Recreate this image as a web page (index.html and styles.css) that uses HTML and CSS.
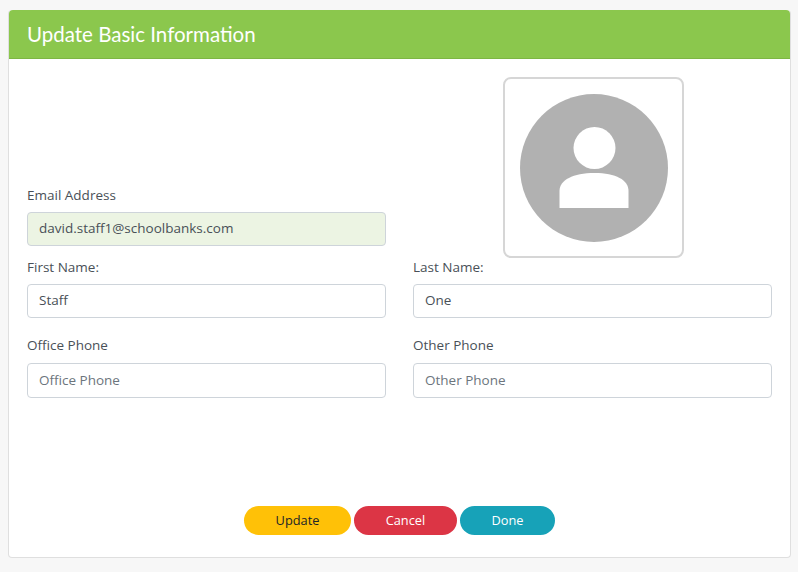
FILE: index.html
```html
<!DOCTYPE html>
<html lang="en">
<head>
<meta charset="utf-8">
<title>Update Basic Information</title>
<link rel="stylesheet" href="styles.css">
</head>
<body>
<main class="card">
  <header class="card-header"><h1>Update Basic Information</h1></header>
  <form class="card-body">
    <div class="top-row">
      <div class="field email-field">
        <label for="email">Email Address</label>
        <input id="email" class="filled" type="text" value="david.staff1@schoolbanks.com">
      </div>
      <div class="avatar-col">
        <div class="avatar">
          <svg viewBox="0 0 148 148" width="148" height="148" aria-hidden="true">
            <circle cx="74" cy="74" r="74" fill="#b1b1b1"/>
            <circle cx="74.500" cy="54" r="21" fill="#fff"/>
            <path d="M39.500 114V97C39.500 86 53 79 74.500 79S108.500 86 108.500 97V114Z" fill="#fff"/>
          </svg>
        </div>
      </div>
    </div>
    <div class="row name-row">
      <div class="field"><label for="first">First Name:</label><input id="first" type="text" value="Staff"></div>
      <div class="field"><label for="last">Last Name:</label><input id="last" type="text" value="One"></div>
    </div>
    <div class="row phone-row">
      <div class="field"><label for="office">Office Phone</label><input id="office" type="text" placeholder="Office Phone"></div>
      <div class="field"><label for="other">Other Phone</label><input id="other" type="text" placeholder="Other Phone"></div>
    </div>
    <div class="actions">
      <button type="button" class="btn btn-update">Update</button>
      <button type="button" class="btn btn-cancel">Cancel</button>
      <button type="button" class="btn btn-done">Done</button>
    </div>
  </form>
</main>
</body>
</html>
```
FILE: styles.css
```css
* { box-sizing: border-box; }
html, body { height: 100%; }
body {
  margin: 0;
  padding: 10px 7px 14px 8px;
  background: #f7f7f7;
  font-family: "Open Sans", sans-serif;
  font-size: 13.500px;
  color: #495057;
  overflow: hidden;
}
.card {
  height: 548px;
  background: #fff;
  border: 1px solid #dfdfdf;
  border-top: 0;
  border-radius: 4px;
  display: flex;
  flex-direction: column;
}
.card-header {
  height: 49px;
  background: #8bc74d;
  border-bottom: 1px solid #7db644;
  border-radius: 4px 4px 0 0;
  padding: 0 18px 1px;
  display: flex;
  align-items: center;
}
.card-header h1 {
  margin: 0;
  font-family: Lato, sans-serif;
  font-size: 20.500px;
  font-weight: 400;
  color: #fff;
}
.card-body {
  flex: 1;
  padding: 18px 18px 22px;
  display: flex;
  flex-direction: column;
}
.top-row, .row {
  display: grid;
  grid-template-columns: 359px 359px;
  column-gap: 27px;
}
.email-field { align-self: end; margin-bottom: 11px; }
.avatar-col { display: flex; justify-content: center; padding-left: 2px; }
.avatar {
  width: 181px;
  height: 181px;
  margin-bottom: -1px;
  border: 2px solid #d6d6d6;
  border-radius: 8px;
  display: flex;
  align-items: center;
  justify-content: center;
  flex: none;
}
.phone-row { margin-top: 17px; }
.phone-row label { margin-bottom: 8px; }
.phone-row input { height: 35px; }
label {
  display: block;
  height: 20px;
  line-height: 20px;
  margin-bottom: 7px;
}
input {
  display: block;
  width: 100%;
  height: 34px;
  padding: 0 11px 2px;
  font: inherit;
  color: #495057;
  background: #fff;
  border: 1px solid #ced4da;
  border-radius: 4px;
}
input::placeholder { color: #6c757d; opacity: 1; }
input.filled { background: #ecf4e3; }
.actions {
  margin-top: auto;
  display: flex;
  justify-content: center;
  gap: 3px;
}
.btn {
  height: 29px;
  border: 0;
  border-radius: 15px;
  font: 400 12.800px "Open Sans", sans-serif;
  padding: 0 0 2px;
}
.btn-update { width: 107px; background: #ffc107; color: #212529; }
.btn-cancel { width: 103px; background: #dc3545; color: #fff; }
.btn-done { width: 95px; background: #17a2b8; color: #fff; }
```
